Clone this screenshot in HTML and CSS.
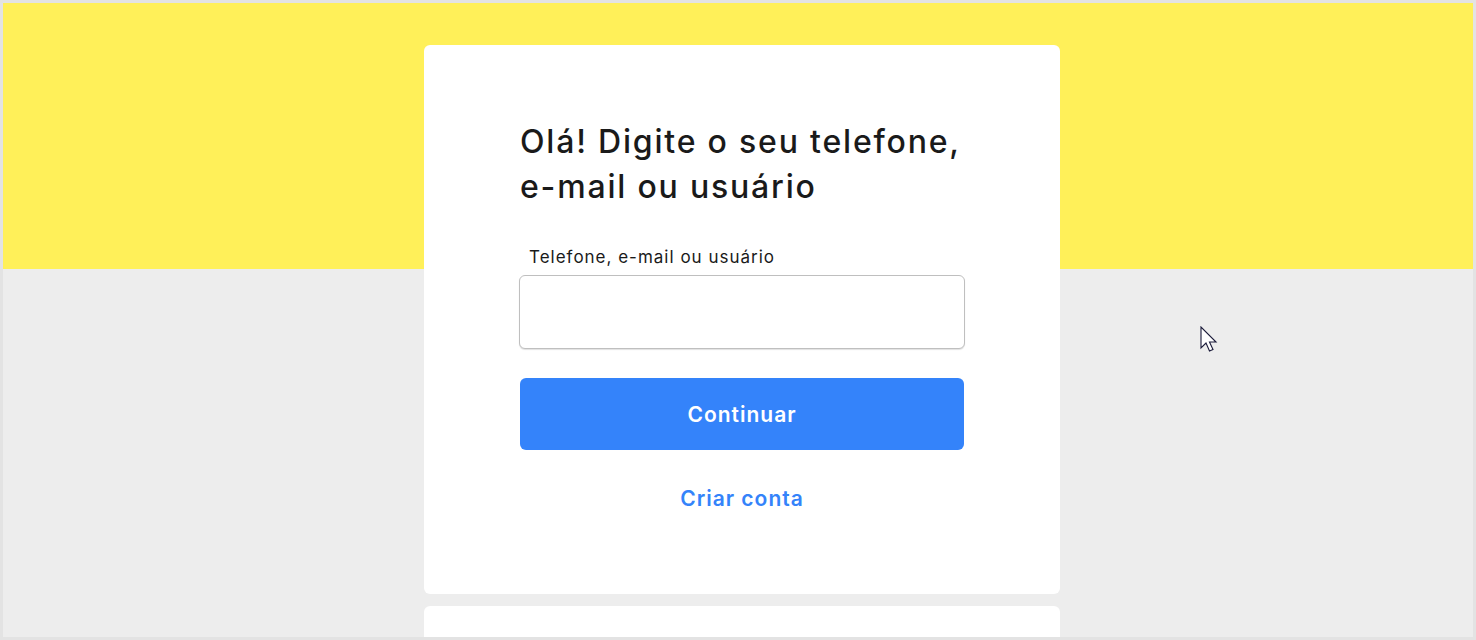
FILE: index.html
```html
<!DOCTYPE html>
<html lang="pt-BR">
<head>
<meta charset="utf-8">
<title>Mercado Livre - Entrar</title>
<link rel="stylesheet" href="styles.css">
</head>
<body>
<div class="frame">
  <main class="page">
    <section class="card card-main">
      <h1 class="title">Olá! Digite o seu telefone,<br>e-mail ou usuário</h1>
      <form class="form">
        <label class="label" for="user">Telefone, e-mail ou usuário</label>
        <input class="input" id="user" type="text">
        <button class="btn-primary" type="button">Continuar</button>
        <a class="link" href="#">Criar conta</a>
      </form>
    </section>
    <section class="card card-second"></section>
  </main>
  <svg class="cursor" width="20" height="30" viewBox="0 0 20 30" aria-hidden="true">
    <path d="M1 1 L1 22 L6 17 L9.5 25 L13 23.5 L9.5 16 L16 16 Z" fill="#fff" stroke="#1b1b3a" stroke-width="1.1" stroke-linejoin="miter"/>
  </svg>
</div>
</body>
</html>
```
FILE: styles.css
```css
html, body {
  margin: 0;
  padding: 0;
}
body {
  background: #e3e3e3;
  font-family: "Inter", "Open Sans", "Liberation Sans", sans-serif;
  color: #1a1a1a;
}
.frame {
  position: relative;
  width: 1470px;
  height: 634px;
  margin: 3px;
  overflow: hidden;
}
.page {
  height: 100%;
  background: linear-gradient(to bottom, #fff059 0, #fff059 266px, #ededed 266px, #ededed 100%);
  display: flex;
  flex-direction: column;
  align-items: center;
  padding-top: 42px;
  padding-left: 8px;
  box-sizing: border-box;
  gap: 12px;
}
.card {
  width: 636px;
  background: #fff;
  border-radius: 6px;
  box-sizing: border-box;
  flex-shrink: 0;
}
.card-main {
  height: 549px;
  padding: 74px 96px 0 96px;
}
.card-second {
  height: 60px;
}
.title {
  margin: 0;
  font-size: 32px;
  font-weight: 500;
  line-height: 45px;
  letter-spacing: 1.8px;
  color: #1a1a1a;
  white-space: nowrap;
}
.form {
  display: flex;
  flex-direction: column;
  margin-top: 36px;
}
.label {
  font-size: 17px;
  line-height: 24px;
  letter-spacing: 1px;
  padding-left: 9px;
  margin-bottom: 6px;
  color: #1a1a1a;
}
.input {
  width: 446px;
  height: 74px;
  margin-left: -1px;
  box-sizing: border-box;
  border: 1px solid #bfbfbf;
  border-radius: 6px;
  box-shadow: 0 1px 1px rgba(0,0,0,0.12);
  background: #fff;
  outline: none;
  font: inherit;
}
.btn-primary {
  margin-top: 29px;
  width: 444px;
  height: 72px;
  border: none;
  border-radius: 6px;
  background: #3483fa;
  color: #fff;
  font-family: inherit;
  font-size: 21px;
  font-weight: 600;
  letter-spacing: 1px;
  cursor: pointer;
}
.link {
  margin-top: 36px;
  align-self: center;
  width: 444px;
  text-align: center;
  color: #3483fa;
  text-decoration: none;
  font-size: 21px;
  font-weight: 600;
  letter-spacing: 1px;
  line-height: 26px;
}
.cursor {
  position: absolute;
  left: 1197px;
  top: 323px;
}
```
